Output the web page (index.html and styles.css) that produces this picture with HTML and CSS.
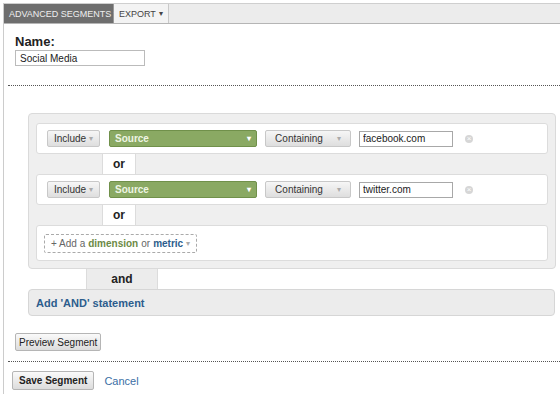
FILE: index.html
```html
<!DOCTYPE html>
<html lang="en">
  <head>
    <meta charset="UTF-8" />
    <title>Advanced Segments</title>
    <link rel="stylesheet" href="styles.css">
  </head>
  <body>
    <div class="page">
      <div class="toolbar">
        <div class="tab tab-active">Advanced Segments <span class="caret">▾</span></div>
        <div class="tab">Export <span class="caret">▾</span></div>
      </div>

      <div class="name-block">
        <label class="name-label">Name:</label>
        <input class="name-input" type="text" value="Social Media" readonly />
      </div>

      <div class="divider"></div>

      <div class="panel">
        <div class="row">
          <span class="btn btn-include">Include <span class="arrow">▾</span></span>
          <span class="dim">Source <span class="dim-arrow">▾</span></span>
          <span class="btn btn-match">Containing <span class="arrow">▾</span></span>
          <input class="value" type="text" value="facebook.com" readonly />
          <span class="remove">×</span>
        </div>
        <div class="or-tab">or</div>
        <div class="row">
          <span class="btn btn-include">Include <span class="arrow">▾</span></span>
          <span class="dim">Source <span class="dim-arrow">▾</span></span>
          <span class="btn btn-match">Containing <span class="arrow">▾</span></span>
          <input class="value" type="text" value="twitter.com" readonly />
          <span class="remove">×</span>
        </div>
        <div class="or-tab">or</div>
        <div class="row row-add">
          <span class="add-box">+ Add a <span class="green">dimension</span> or <span class="blue">metric</span> <span class="arrow">▾</span></span>
        </div>
      </div>

      <div class="and-tab">and</div>
      <div class="and-panel">
        <a class="and-link">Add 'AND' statement</a>
      </div>

      <div class="preview">
        <button class="btn-plain">Preview Segment</button>
      </div>

      <div class="divider"></div>

      <div class="actions">
        <button class="btn-plain btn-save">Save Segment</button>
        <a class="cancel">Cancel</a>
      </div>
    </div>
  </body>
</html>
```

FILE: styles.css
```css
body {
  margin: 0;
  padding: 0;
  background-color: #fff;
  font-family: "Liberation Sans", Arial, sans-serif;
  font-size: 11px;
  color: #222;
}

.page {
  margin: 3px 0 0 3px;
  border-left: 1px solid #ccc;
  min-height: 391px;
}

.toolbar {
  display: flex;
  height: 19px;
  background-color: #ececec;
  border-top: 1px solid #cfcfcf;
  border-bottom: 1px solid #b5b5b5;
}

.tab {
  display: flex;
  align-items: center;
  padding: 0 5px;
  font-size: 9px;
  white-space: nowrap;
  text-transform: uppercase;
  color: #444;
  background-color: #f3f3f3;
  border-right: 1px solid #c9c9c9;
}

.tab-active {
  width: 110px;
  box-sizing: border-box;
  background-color: #6e6e6e;
  color: #eee;
  border-right: 1px solid #999;
}

.caret {
  font-size: 8px;
  margin-left: 3px;
}

.name-block {
  display: flex;
  flex-direction: column;
  align-items: flex-start;
  padding: 11px 0 0 11px;
}

.name-label {
  font-size: 13px;
  font-weight: bold;
  color: #222;
  line-height: 14px;
}

.name-input {
  width: 120px;
  height: 14px;
  margin-top: 1px;
  padding: 0 4px;
  border: 1px solid #bbb;
  font-family: inherit;
  font-size: 10px;
  color: #222;
  box-sizing: content-box;
}

.divider {
  margin: 19px 0 0 4px;
  border-top: 1px dotted #555;
}

.panel {
  margin: 27px 4px 0 24px;
  padding: 9px 7px 7px 7px;
  background-color: #efefef;
  border: 1px solid #dadada;
  border-radius: 4px;
}

.row {
  display: flex;
  align-items: center;
  height: 29px;
  padding: 0 10px;
  background-color: #fff;
  border: 1px solid #dcdcdc;
  border-radius: 3px;
}

.row-add {
  height: 34px;
  padding: 0 7px;
}

.btn {
  display: flex;
  align-items: center;
  justify-content: center;
  height: 15px;
  border: 1px solid #c8c8c8;
  border-radius: 2px;
  background: linear-gradient(#f6f6f6, #dedede);
  color: #333;
  font-size: 10px;
}

.btn-include {
  width: 51px;
}

.btn-match {
  width: 84px;
  margin-left: 8px;
}

.arrow {
  font-size: 8px;
  color: #aaa;
  margin-left: 3px;
}

.btn-match .arrow {
  margin-left: 14px;
}

.dim {
  display: flex;
  align-items: center;
  justify-content: space-between;
  width: 136px;
  height: 15px;
  margin-left: 9px;
  padding: 0 5px;
  background-color: #8aa963;
  border: 1px solid #70904a;
  border-radius: 2px;
  color: #eef5e4;
  font-size: 10px;
  font-weight: bold;
}

.dim-arrow {
  font-size: 8px;
  color: #fff;
}

.value {
  width: 86px;
  height: 14px;
  margin-left: 8px;
  padding: 0 3px;
  border: 1px solid #a8a8a8;
  font-family: inherit;
  font-size: 10px;
  color: #222;
  box-sizing: content-box;
}

.remove {
  display: flex;
  align-items: center;
  justify-content: center;
  width: 8px;
  height: 8px;
  margin-left: 12px;
  border-radius: 50%;
  background-color: #d6d6d6;
  color: #fff;
  font-size: 8px;
  line-height: 8px;
}

.or-tab {
  width: 32px;
  height: 20px;
  margin-left: 66px;
  background-color: #fff;
  border-left: 1px solid #dcdcdc;
  border-right: 1px solid #dcdcdc;
  font-size: 12px;
  font-weight: bold;
  line-height: 20px;
  text-align: center;
  color: #222;
}

.add-box {
  display: flex;
  align-items: center;
  height: 17px;
  padding: 0 6px;
  border: 1px dashed #aaa;
  border-radius: 2px;
  color: #666;
  font-size: 10px;
}

.add-box .green {
  color: #6c8a45;
  font-weight: bold;
  margin: 0 3px;
}

.add-box .blue {
  color: #2c5d8c;
  font-weight: bold;
  margin-left: 3px;
}

.and-tab {
  width: 70px;
  height: 20px;
  margin-left: 82px;
  background-color: #ececec;
  border-left: 1px solid #dcdcdc;
  border-right: 1px solid #dcdcdc;
  font-size: 12px;
  font-weight: bold;
  line-height: 20px;
  text-align: center;
  color: #222;
}

.and-panel {
  display: flex;
  align-items: center;
  height: 25px;
  margin: 0 5px 0 24px;
  padding: 0 7px;
  background-color: #ececec;
  border: 1px solid #d6d6d6;
  border-radius: 4px;
}

.and-link {
  color: #2c5d8c;
  font-weight: bold;
  font-size: 11px;
}

.preview {
  padding: 17px 0 0 11px;
}

.btn-plain {
  height: 18px;
  padding: 0 3px;
  border: 1px solid #b5b5b5;
  border-radius: 2px;
  background: linear-gradient(#fafafa, #dcdcdc);
  font-family: inherit;
  font-size: 10px;
  color: #222;
}

.preview + .divider {
  margin-top: 10px;
}

.actions {
  display: flex;
  align-items: center;
  padding: 9px 0 0 8px;
}

.btn-save {
  height: 19px;
  font-size: 10px;
  font-weight: bold;
  padding: 0 6px;
}

.cancel {
  margin-left: 10px;
  color: #3a6ea5;
  font-size: 11px;
}
```
